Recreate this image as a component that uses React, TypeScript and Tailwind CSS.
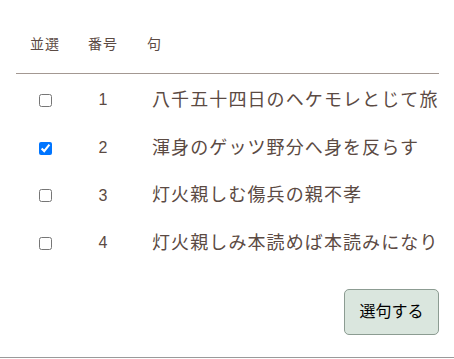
import { useState } from 'react';

const ROWS = [
  { id: 1, text: '八千五十四日のヘケモレとじて旅', checked: false },
  { id: 2, text: '渾身のゲッツ野分へ身を反らす', checked: true },
  { id: 3, text: '灯火親しむ傷兵の親不孝', checked: false },
  { id: 4, text: '灯火親しみ本読めば本読みになり', checked: false },
];

const font = "font-['Liberation_Sans','Noto_Sans_CJK_JP',sans-serif]";

export default function App() {
  const [checked, setChecked] = useState(ROWS.map((r) => r.checked));

  return (
    <div className={`w-[454px] h-[359px] bg-white text-[#5b4a43] ${font}`}>
      <div className="h-[358px] border-b border-[#9a9a9a] pl-4 pr-[15px] pt-[17px]">
        {/* Header */}
        <div className="flex h-[57px] items-center border-b border-[#a39892] pb-px text-[14px] tracking-[1px]">
          <div className="w-[58px] text-center">並選</div>
          <div className="w-[58px] text-center">番号</div>
          <div className="pl-[15px]">句</div>
        </div>

        {/* Rows */}
        <div className="mt-[2.5px] flex flex-col">
          {ROWS.map((row, i) => (
            <div key={row.id} className="flex h-[47.7px] items-center">
              <div className="flex w-[58px] justify-center">
                <input
                  type="checkbox"
                  checked={checked[i]}
                  onChange={() =>
                    setChecked((c) => c.map((v, j) => (j === i ? !v : v)))
                  }
                  className="m-0 h-[13px] w-[13px]"
                />
              </div>
              <div className="w-[58px] text-center text-[16px]">{row.id}</div>
              <div className="pl-5 text-[18px] tracking-[1.1px] whitespace-nowrap">
                {row.text}
              </div>
            </div>
          ))}
        </div>

        <div className="mt-[22px] flex justify-end">
          <button
            type="button"
            className="h-[46px] w-[95px] rounded-[5px] border border-[#8c9c92] bg-[#dae6de] text-[16px] text-black"
          >
            選句する
          </button>
        </div>
      </div>
    </div>
  );
}
